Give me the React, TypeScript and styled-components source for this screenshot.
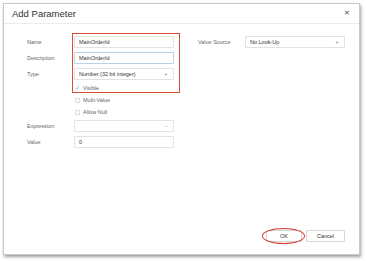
import styled, { createGlobalStyle } from 'styled-components';

const GlobalStyle = createGlobalStyle`
  html, body {
    margin: 0;
    padding: 0;
    background: #ffffff;
  }
  body {
    font-family: "Liberation Sans", Arial, sans-serif;
    color: #333;
  }
  * { box-sizing: border-box; }
`;

const Page = styled.div`
  width: 367px;
  height: 261px;
  padding: 3px 0 0 3px;
`;

const Dialog = styled.div`
  width: 357px;
  height: 252px;
  background: #fff;
  border: 1px solid #c9c9c9;
  box-shadow: 1px 2px 3px rgba(0, 0, 0, 0.38);
  display: flex;
  flex-direction: column;
`;

const Header = styled.div`
  height: 20px;
  border-bottom: 1px solid #ececec;
  display: flex;
  align-items: center;
  justify-content: space-between;
  padding: 0 9px 0 8px;
`;

const Title = styled.h1`
  margin: 0;
  font-size: 9.5px;
  font-weight: 400;
  color: #333;
`;

const Close = styled.span`
  font-size: 6.5px;
  color: #555;
  line-height: 1;
`;

const Body = styled.div`
  flex: 1;
  display: flex;
  gap: 24px;
  padding: 10px 0 0 23px;
`;

const FormGrid = styled.div`
  display: grid;
  grid-template-columns: 47px 100px;
  grid-template-rows: 16px 16px 16px 12px 12px 12px 16px 16px;
  align-items: center;
  align-self: flex-start;
  position: relative;
`;

const Label = styled.label`
  font-size: 5.5px;
  color: #666;
`;

const Input = styled.div<{ $focused?: boolean }>`
  height: 12px;
  border: 1px solid ${(p) => (p.$focused ? '#b9d3ea' : '#e2e2e2')};
  border-radius: 1px;
  display: flex;
  align-items: center;
  justify-content: space-between;
  padding: 0 5px 0 4px;
  font-size: 5.5px;
  color: #333;
  background: #fff;
`;

const Caret = styled.span`
  font-size: 4px;
  color: #999;
`;

const Dots = styled.span`
  font-size: 5px;
  color: #888;
  letter-spacing: -0.5px;
`;

const CheckRow = styled.div`
  grid-column: 2;
  display: flex;
  align-items: center;
  gap: 3px;
  padding-left: 1px;
  font-size: 5.5px;
  color: #666;
`;

const Box = styled.span`
  width: 5px;
  height: 5px;
  border: 1px solid #ddd;
  background: #fff;
`;

const Tick = styled.span`
  width: 5px;
  font-size: 5.5px;
  color: #6aa6d8;
  text-align: center;
`;

const Highlight = styled.div`
  position: absolute;
  grid-column: 2;
  grid-row: 1 / 5;
  top: -1px;
  left: -2px;
  right: -6px;
  bottom: 1px;
  border: 1.5px solid #dd4c32;
  pointer-events: none;
  z-index: 1;
`;

const SideGrid = styled.div`
  display: grid;
  grid-template-columns: 47px 100px;
  grid-template-rows: 16px;
  align-items: center;
  align-self: flex-start;
`;

const Footer = styled.div`
  display: flex;
  justify-content: flex-end;
  gap: 4px;
  padding: 0 14px 12px 0;
`;

const Button = styled.button<{ $w: number }>`
  width: ${(p) => p.$w}px;
  height: 12px;
  padding: 0;
  border: 1px solid #d6d6d6;
  border-radius: 1px;
  background: #fff;
  font-family: "Liberation Sans", Arial, sans-serif;
  font-size: 5.5px;
  color: #333;
`;

const Circled = styled.div`
  position: relative;
  display: flex;
`;

const Ellipse = styled.span`
  position: absolute;
  left: -4px;
  right: -3px;
  top: -2px;
  bottom: -2px;
  border: 1.3px solid #d63a2c;
  border-radius: 50%;
  pointer-events: none;
`;

export default function App() {
  return (
    <Page>
      <GlobalStyle />
      <Dialog>
        <Header>
          <Title>Add Parameter</Title>
          <Close>✕</Close>
        </Header>
        <Body>
          <FormGrid>
            <Label>Name</Label>
            <Input>MainOrderId</Input>
            <Label>Description</Label>
            <Input $focused>MainOrderId</Input>
            <Label>Type</Label>
            <Input>
              Number (32 bit integer)
              <Caret>▼</Caret>
            </Input>
            <CheckRow>
              <Tick>✓</Tick>
              Visible
            </CheckRow>
            <CheckRow>
              <Box />
              Multi-Value
            </CheckRow>
            <CheckRow>
              <Box />
              Allow Null
            </CheckRow>
            <Label>Expression</Label>
            <Input>
              <span />
              <Dots>···</Dots>
            </Input>
            <Label>Value</Label>
            <Input>0</Input>
            <Highlight />
          </FormGrid>
          <SideGrid>
            <Label>Value Source</Label>
            <Input>
              No Look-Up
              <Caret>▼</Caret>
            </Input>
          </SideGrid>
        </Body>
        <Footer>
          <Circled>
            <Button $w={36}>OK</Button>
            <Ellipse />
          </Circled>
          <Button $w={39}>Cancel</Button>
        </Footer>
      </Dialog>
    </Page>
  );
}
